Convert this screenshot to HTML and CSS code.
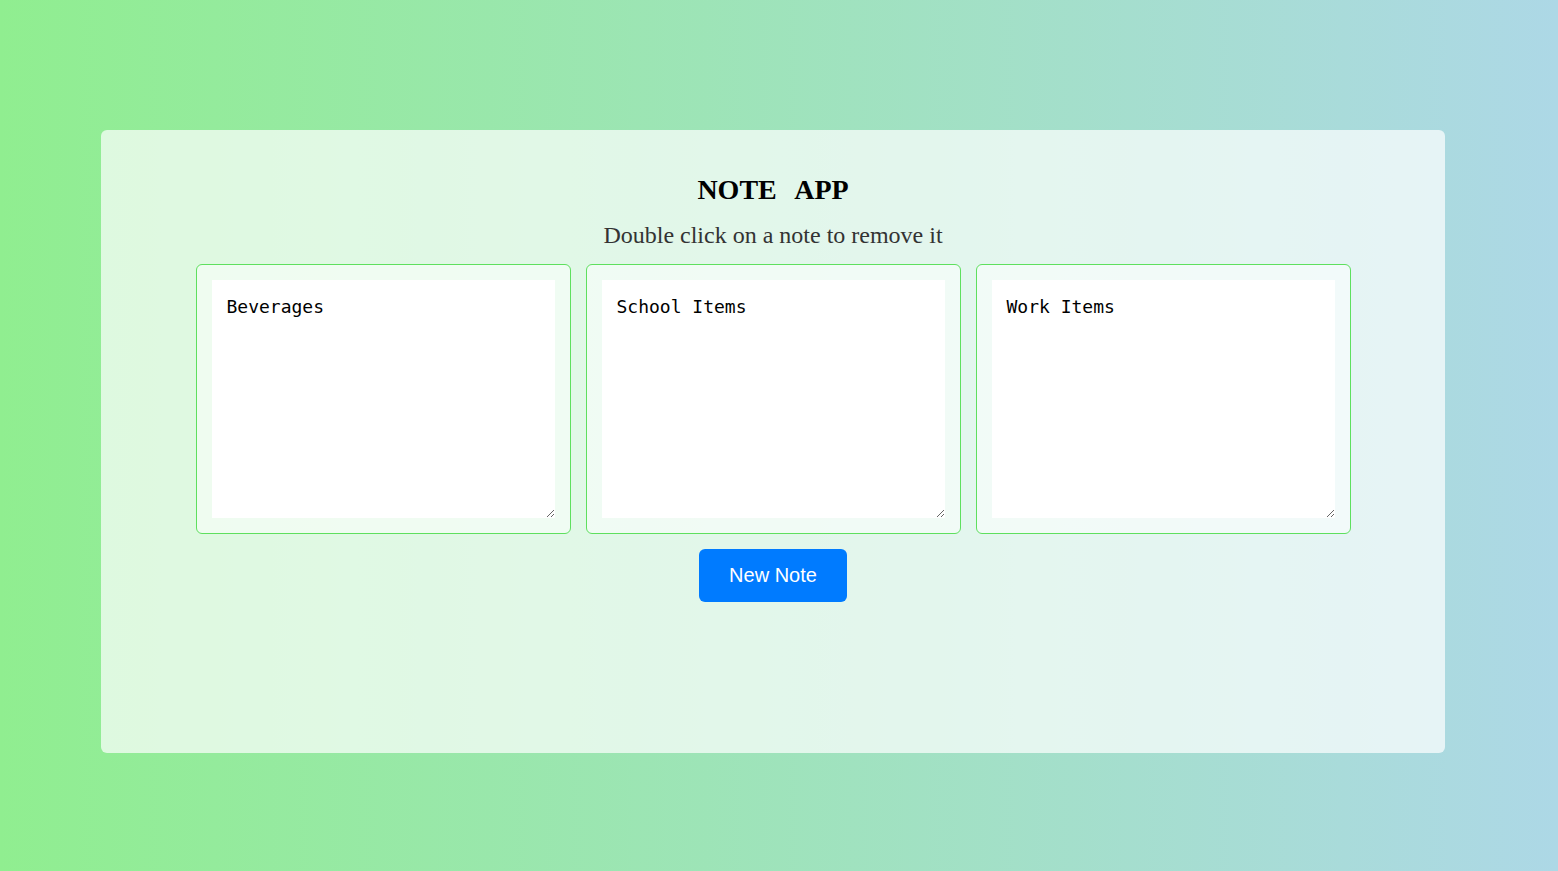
FILE: index.html
```html
<!DOCTYPE html>
<html>
<head>
<meta charset="utf-8">
<title>Note App</title>
<link rel="stylesheet" href="styles.css">
</head>
<body>
<main class="container">
  <h1 class="title">NOTE APP</h1>
  <p class="subtitle">Double click on a note to remove it</p>
  <div class="notes">
    <div class="note"><textarea class="note-text">Beverages</textarea></div>
    <div class="note"><textarea class="note-text">School Items</textarea></div>
    <div class="note"><textarea class="note-text">Work Items</textarea></div>
  </div>
  <button class="btn">New Note</button>
</main>
</body>
</html>
```
FILE: styles.css
```css
html, body {
  margin: 0;
  padding: 0;
}
body {
  min-height: 871px;
  background: linear-gradient(to right, #90ee90, #add8e6);
  font-family: "Liberation Serif", "Times New Roman", serif;
  overflow: hidden;
}
.container {
  box-sizing: border-box;
  margin: 130px 0 0 101px;
  width: 1344px;
  height: 623px;
  background: rgba(255, 255, 255, 0.7);
  border-radius: 6px;
  display: flex;
  flex-direction: column;
  align-items: center;
  padding-top: 42px;
}
.title {
  margin: 0;
  font-size: 28px;
  font-weight: bold;
  line-height: 36px;
  word-spacing: 12px;
  color: #000;
}
.subtitle {
  margin: 13px 0 0;
  font-size: 24px;
  line-height: 28px;
  color: #333;
}
.notes {
  display: flex;
  gap: 15px;
  margin-top: 15px;
}
.note {
  width: 375px;
  height: 270px;
  box-sizing: border-box;
  border: 1px solid #5ee05e;
  border-radius: 6px;
  background: rgba(255, 255, 255, 0.5);
  padding: 15px;
  display: flex;
}
.note-text {
  box-sizing: border-box;
  width: 343px;
  height: 238px;
  border: none;
  outline: none;
  background: #fff;
  padding: 16px 15px 15px;
  font-family: "DejaVu Sans Mono", "Liberation Mono", monospace;
  font-size: 18px;
  line-height: 22px;
  color: #000;
}
.btn {
  margin-top: 15px;
  width: 148px;
  height: 53px;
  border: none;
  border-radius: 6px;
  background: #007bff;
  color: #fff;
  font-family: "Liberation Sans", Arial, sans-serif;
  font-size: 20px;
  cursor: pointer;
}
```
